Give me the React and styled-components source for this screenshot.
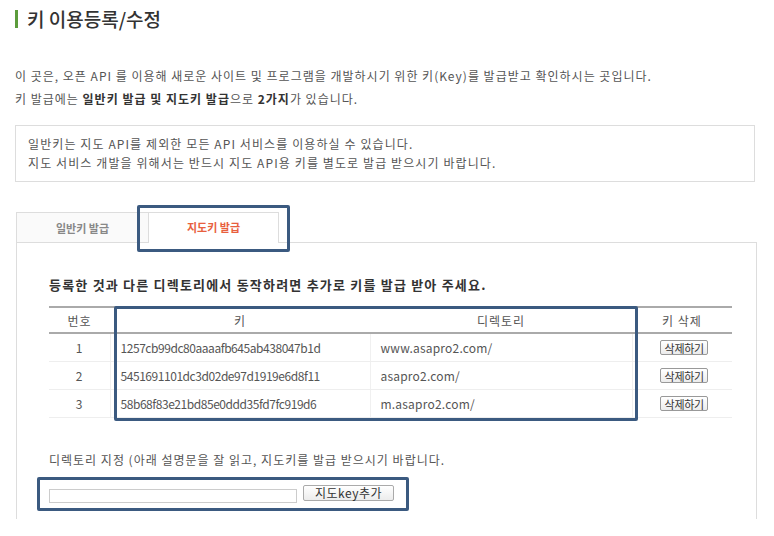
import React from 'react';
import styled, { createGlobalStyle } from 'styled-components';

const GlobalStyle = createGlobalStyle`
  body {
    margin: 0;
    background: #fff;
    font-family: 'Noto Sans CJK KR', 'Noto Sans', sans-serif;
    font-size: 12px;
    color: #555;
  }
  * { box-sizing: border-box; }
`;

const keys = [
  { id: 1, key: '1257cb99dc80aaaafb645ab438047b1d', dir: 'www.asapro2.com/' },
  { id: 2, key: '5451691101dc3d02de97d1919e6d8f11', dir: 'asapro2.com/' },
  { id: 3, key: '58b68f83e21bd85e0ddd35fd7fc919d6', dir: 'm.asapro2.com/' },
];

const App = () => {
  return (
    <Page>
      <GlobalStyle />
      <Title>키 이용등록/수정</Title>

      <Intro>
        <p>
          이 곳은, 오픈 API 를 이용해 새로운 사이트 및 프로그램을 개발하시기 위한 키(Key)를
          발급받고 확인하시는 곳입니다.
        </p>
        <p>
          키 발급에는 <b>일반키 발급 및 지도키 발급</b>으로 <b>2가지</b>가 있습니다.
        </p>
      </Intro>

      <Notice>
        <p>일반키는 지도 API를 제외한 모든 API 서비스를 이용하실 수 있습니다.</p>
        <p>지도 서비스 개발을 위해서는 반드시 지도 API용 키를 별도로 발급 받으시기 바랍니다.</p>
      </Notice>

      <Tabs>
        <Tab>일반키 발급</Tab>
        <Tab active>지도키 발급</Tab>
      </Tabs>

      <Panel>
        <Heading>등록한 것과 다른 디렉토리에서 동작하려면 추가로 키를 발급 받아 주세요.</Heading>

        <TableWrap>
          <KeyTable>
            <colgroup>
              <col style={{ width: 61 }} />
              <col style={{ width: 260 }} />
              <col style={{ width: 262 }} />
              <col style={{ width: 100 }} />
            </colgroup>
            <thead>
              <tr>
                <Th>번호</Th>
                <Th>키</Th>
                <Th>디렉토리</Th>
                <Th>키 삭제</Th>
              </tr>
            </thead>
            <tbody>
              {keys.map((row) => (
                <tr key={row.id}>
                  <Td align='center'>{row.id}</Td>
                  <Td narrow>{row.key}</Td>
                  <Td>{row.dir}</Td>
                  <Td align='center'>
                    <SmallButton>삭제하기</SmallButton>
                  </Td>
                </tr>
              ))}
            </tbody>
          </KeyTable>
          <Highlight />
        </TableWrap>

        <DirNote>디렉토리 지정 (아래 설명문을 잘 읽고, 지도키를 발급 받으시기 바랍니다.</DirNote>

        <AddRow>
          <DirInput type='text' />
          <AddButton>지도key추가</AddButton>
        </AddRow>
      </Panel>
    </Page>
  );
};

const Page = styled.div`
  width: 774px;
  padding: 10px 0 0 15px;
`;

const Title = styled.h2`
  margin: 0;
  height: 18px;
  line-height: 18px;
  padding-left: 9px;
  border-left: 3px solid #5c9c3c;
  font-size: 19px;
  font-weight: 500;
  color: #333;
`;

const Intro = styled.div`
  margin-top: 36px;

  p {
    margin: 0;
    line-height: 23px;
    color: #555;
    letter-spacing: 1px;
  }

  b {
    color: #333;
    font-weight: 700;
  }
`;

const Notice = styled.div`
  margin-top: 15px;
  width: 740px;
  border: 1px solid #ddd;
  padding: 8px 12px 9px;

  p {
    margin: 0;
    line-height: 19px;
    color: #555;
    letter-spacing: 1.1px;
  }
`;

const Tabs = styled.div`
  margin-top: 30px;
  margin-left: 1px;
  width: 741px;
  height: 31px;
  display: flex;
  align-items: flex-end;
  border-bottom: 1px solid #ddd;
`;

const Tab = styled.div`
  position: relative;
  width: ${(p) => (p.active ? '131px' : '132px')};
  height: ${(p) => (p.active ? '31px' : '30px')};
  margin-bottom: ${(p) => (p.active ? '-1px' : '0')};
  display: flex;
  align-items: center;
  justify-content: center;
  padding-bottom: ${(p) => (p.active ? '2px' : '0')};
  border: 1px solid #ddd;
  border-bottom: none;
  border-right: ${(p) => (p.active ? '1px solid #ddd' : 'none')};
  background: ${(p) => (p.active ? '#fff' : '#fafafa')};
  color: ${(p) => (p.active ? '#e8603e' : '#888')};
  font-size: 11px;
  font-weight: 700;

  ${(p) =>
    p.active &&
    `
    &::after {
      content: '';
      position: absolute;
      top: -8px;
      left: -12px;
      right: -12px;
      bottom: -9px;
      border: 3px solid #3b5a80;
      border-radius: 2px;
    }
  `}
`;

const Panel = styled.div`
  margin-left: 1px;
  width: 741px;
  border-left: 1px solid #ddd;
  border-right: 1px solid #ddd;
  padding: 32px 0 8px 32px;
`;

const Heading = styled.h3`
  margin: 0;
  line-height: 20px;
  font-size: 13px;
  font-weight: 700;
  color: #333;
  letter-spacing: 1.2px;
`;

const TableWrap = styled.div`
  position: relative;
  margin-top: 11px;
  width: 683px;
`;

const KeyTable = styled.table`
  width: 683px;
  border-collapse: collapse;
  table-layout: fixed;
  border-top: 2px solid #aaa;
`;

const Th = styled.th`
  height: 26px;
  font-weight: 400;
  color: #555;
  font-size: 12px;
  letter-spacing: 1px;
  border-bottom: 2px solid #aaa;
`;

const Td = styled.td`
  height: 28px;
  padding: 0 ${(p) => (p.align === 'center' ? '0' : '10px')};
  text-align: ${(p) => p.align || 'left'};
  color: #555;
  font-size: 12px;
  letter-spacing: ${(p) => (p.narrow ? '-0.45px' : '0.2px')};
  border-bottom: 1px solid #eee;
  border-left: 1px solid #f0f0f0;

  &:first-child {
    border-left: none;
  }
`;

const Highlight = styled.div`
  position: absolute;
  top: 0;
  left: 65px;
  width: 524px;
  height: 115px;
  border: 3px solid #3b5a80;
  border-radius: 2px;
  pointer-events: none;
`;

const SmallButton = styled.button`
  width: 48px;
  height: 15px;
  margin-left: 4px;
  padding: 0;
  line-height: 12px;
  font-family: inherit;
  font-size: 11px;
  letter-spacing: -0.3px;
  color: #333;
  background: linear-gradient(#fff, #ececec);
  border: 1px solid #999;
  border-radius: 2px;
`;

const DirNote = styled.p`
  margin: 32px 0 0;
  line-height: 20px;
  color: #555;
  letter-spacing: 1px;
`;

const AddRow = styled.div`
  margin: 7px 0 0 -12px;
  width: 372px;
  height: 34px;
  display: flex;
  align-items: flex-start;
  gap: 6px;
  padding: 5px 0 0 9px;
  border: 3px solid #3b5a80;
  border-radius: 2px;
`;

const DirInput = styled.input`
  margin-top: 4px;
  width: 248px;
  height: 14px;
  padding: 0;
  border: 1px solid #ccc;
`;

const AddButton = styled.button`
  width: 91px;
  height: 16px;
  padding: 0;
  line-height: 13px;
  font-family: inherit;
  font-size: 12px;
  letter-spacing: 0.5px;
  color: #333;
  background: linear-gradient(#fff, #ececec);
  border: 1px solid #aaa;
  border-radius: 2px;
`;

export default App;
